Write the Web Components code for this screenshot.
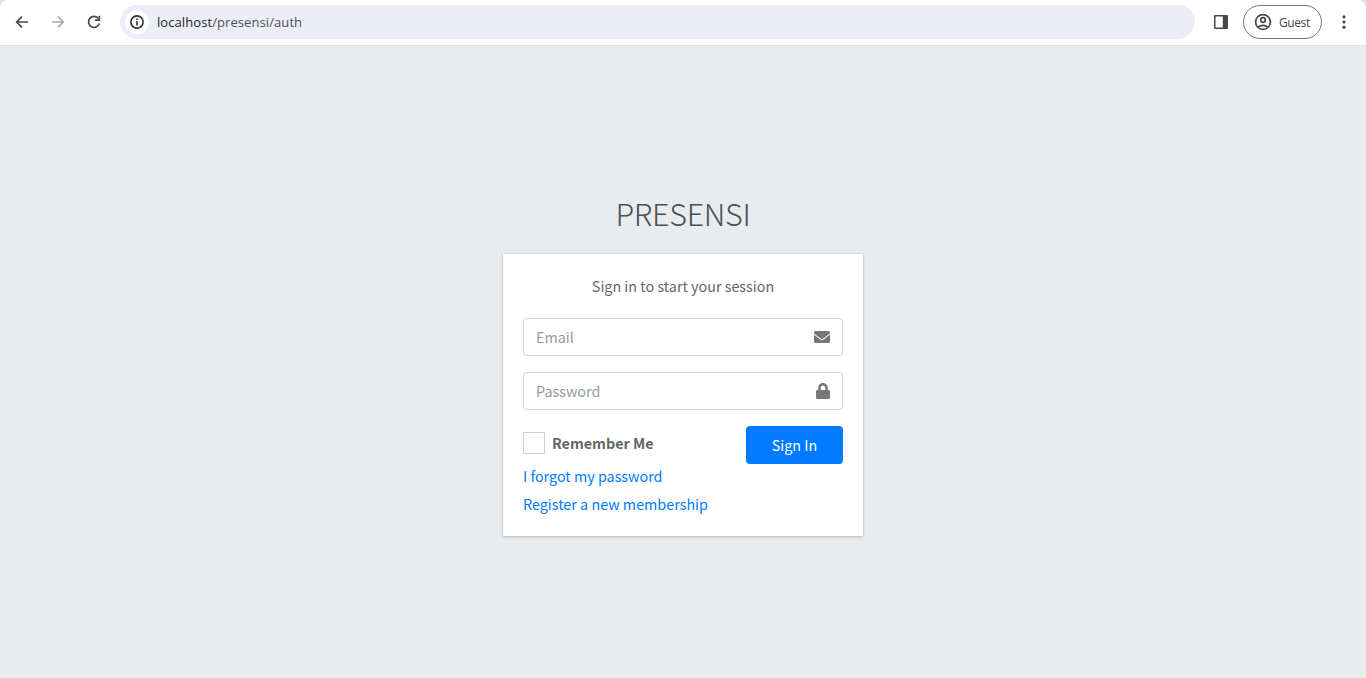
<!DOCTYPE html>
<html lang="en">
<head>
<meta charset="utf-8">
<title>Presensi</title>
<style>
html,body{margin:0;height:100%;overflow:hidden}
body{background:#dce1ea;font-family:"Noto Sans CJK SC","Noto Sans",sans-serif}
</style>
</head>
<body>
<app-window></app-window>
<script>
const define = (name, html, setup) => customElements.define(name, class extends HTMLElement {
  constructor() {
    super();
    const t = document.createElement('template');
    t.innerHTML = html;
    this.attachShadow({mode: 'open'}).append(t.content.cloneNode(true));
  }
  connectedCallback() { if (setup) setup(this, this.shadowRoot); }
});

define('tool-bar', `<style>
:host{display:flex;align-items:center;height:46px;box-sizing:border-box;padding:0 14px 1px;background:#fff;border-bottom:1px solid #dfe2e5;border-radius:8px 8px 0 0;font-family:"Open Sans","Noto Sans",sans-serif;color:#474747}
svg{display:block;flex:none}
.back{margin-right:20px}.fwd{margin-right:20px}
.url{flex:1;display:flex;align-items:center;height:34px;border-radius:17px;background:#ebeef8;margin-left:18px;margin-right:18px;font-size:13px;letter-spacing:.08px;color:#505050}
.info{display:flex;align-items:center;justify-content:center;width:24px;height:24px;border-radius:50%;background:#fff;margin:0 8px 0 5px}
.host{color:#1f1f1f}
.guest{display:flex;align-items:center;box-sizing:border-box;width:79px;height:34px;border:1px solid #747775;border-radius:17px;margin:0 14px 0 14px;padding-left:10px;gap:7px;font-size:12px;letter-spacing:-.4px}
</style>
<svg class="back" width="16" height="16" viewBox="0 0 16 16" fill="none" stroke="#474747" stroke-width="1.7"><path d="M14 8H3M8 2.7 2.7 8 8 13.3"/></svg>
<svg class="fwd" width="16" height="16" viewBox="0 0 16 16" fill="none" stroke="#ababab" stroke-width="1.7"><path d="M2 8h11M8 2.7 13.3 8 8 13.3"/></svg>
<svg width="16" height="16" viewBox="0 0 16 16"><path d="M12.4 4.6A5.5 5.5 0 1 0 13.3 9.6" fill="none" stroke="#474747" stroke-width="1.7"/><path d="M14.2 1.8V7H9V5.3h3.5V1.8z" fill="#474747"/></svg>
<div class="url"><span class="info"><svg width="14" height="14" viewBox="0 0 14 14"><circle cx="7" cy="7" r="6.1" fill="none" stroke="#303030" stroke-width="1.6"/><path d="M6.2 6h1.6v4.4H6.2zM6.2 3.5h1.6v1.6H6.2z" fill="#303030"/></svg></span><span><span class="host">localhost</span>/presensi/auth</span></div>
<svg width="16" height="16" viewBox="0 0 16 16"><path d="M2 1h12q1 0 1 1v12q0 1-1 1H2q-1 0-1-1V2q0-1 1-1zM2.5 2.5v11h7.3v-11z" fill="#474747" fill-rule="evenodd"/></svg>
<div class="guest"><svg width="18" height="18" viewBox="0 0 18 18" fill="none" stroke="#474747" stroke-width="1.7"><circle cx="9" cy="9" r="7.4"/><circle cx="9" cy="7" r="2.3"/><path d="M4 14.2c2.8-2.5 7.2-2.5 10 0"/></svg><span>Guest</span></div>
<svg width="16" height="16" viewBox="0 0 16 16" fill="#474747"><circle cx="8" cy="2.8" r="1.6"/><circle cx="8" cy="8" r="1.6"/><circle cx="8" cy="13.2" r="1.6"/></svg>`);

define('text-field', `<style>
:host{display:flex;align-items:center;box-sizing:border-box;height:38px;border:1px solid #ced4da;border-radius:4px;padding:0 12px;margin-bottom:16px;background:#fff}
input{flex:1;min-width:0;border:0;outline:0;padding:0 0 2px;background:none;font:inherit;height:24px}
input::placeholder{color:#939ba2;opacity:1}
::slotted(svg){display:block}
</style><input><slot></slot>`, (el, root) => {
  const i = root.querySelector('input');
  i.placeholder = el.getAttribute('label');
  i.type = el.getAttribute('type') || 'text';
});

define('check-box', `<style>
:host{display:flex;align-items:center;gap:7px;height:22px;font-weight:700;color:#666}
i{box-sizing:border-box;width:22px;height:22px;border:1px solid #d3cfc8}
span{padding-bottom:2px}
</style><i></i><span><slot></slot></span>`);

define('primary-button', `<style>
:host{display:block}
button{display:block;width:97px;height:38px;border:0;border-radius:4px;padding:0 0 1px;background:#007bff;color:#fff;font:inherit;font-weight:400}
</style><button><slot></slot></button>`);

define('text-link', `<style>
:host{display:block;height:24px;line-height:24px}
a{color:#007bff;text-decoration:none}
</style><a href="#"><slot></slot></a>`);

define('login-card', `<style>
:host{display:block;box-sizing:border-box;width:360px;height:282px;padding:20px;background:#fff;color:#666;font-size:14.35px;box-shadow:0 0 1px rgba(0,0,0,.13),0 1px 3px rgba(0,0,0,.2)}
p{margin:0 0 20px;height:24px;line-height:24px;text-align:center}
.row{display:flex;justify-content:space-between;align-items:flex-start}
check-box{margin-top:6px}
.a{margin-top:0;margin-bottom:4px}
</style>
<p>Sign in to start your session</p>
<text-field label="Email" type="email"><svg width="16" height="16" viewBox="0 0 512 512" fill="#777"><path d="M502.300 190.800c3.900-3.100 9.700-.2 9.700 4.700V400c0 26.500-21.500 48-48 48H48c-26.500 0-48-21.500-48-48V195.600c0-5 5.700-7.800 9.700-4.700 22.400 17.400 52.100 39.500 154.100 113.600 21.100 15.400 56.700 47.800 92.200 47.600 35.700.3 72-32.800 92.300-47.600 102-74.100 131.600-96.300 154-113.700zM256 320c23.200.4 56.600-29.200 73.400-41.400 132.700-96.300 142.800-104.700 173.400-128.700 5.800-4.500 9.200-11.500 9.200-18.900v-19c0-26.500-21.500-48-48-48H48c-26.500 0-48 21.500-48 48v19c0 7.400 3.400 14.300 9.200 18.900 30.600 23.900 40.700 32.400 173.400 128.700 16.800 12.200 50.200 41.800 73.400 41.400z"/></svg></text-field>
<text-field label="Password" type="password"><svg width="14" height="16" viewBox="0 0 448 512" fill="#777"><path d="M400 224h-24v-72C376 68.200 307.800 0 224 0S72 68.200 72 152v72H48c-26.500 0-48 21.500-48 48v192c0 26.500 21.500 48 48 48h352c26.500 0 48-21.500 48-48V272c0-26.500-21.500-48-48-48zm-104 0H152v-72c0-39.700 32.300-72 72-72s72 32.300 72 72v72z"/></svg></text-field>
<div class="row"><check-box>Remember Me</check-box><primary-button>Sign In</primary-button></div>
<text-link class="a">I forgot my password</text-link>
<text-link>Register a new membership</text-link>`);

define('app-window', `<style>
:host{display:flex;flex-direction:column;height:100vh}
main{flex:1;display:flex;flex-direction:column;align-items:center;background:#e9ecef;padding-top:143px}
h1{margin:0 0 17px;height:48px;line-height:48px;font-size:30.5px;letter-spacing:-.3px;font-weight:200;color:#495057}
</style><tool-bar></tool-bar><main><h1>PRESENSI</h1><login-card></login-card></main>`);
</script>
</body>
</html>
